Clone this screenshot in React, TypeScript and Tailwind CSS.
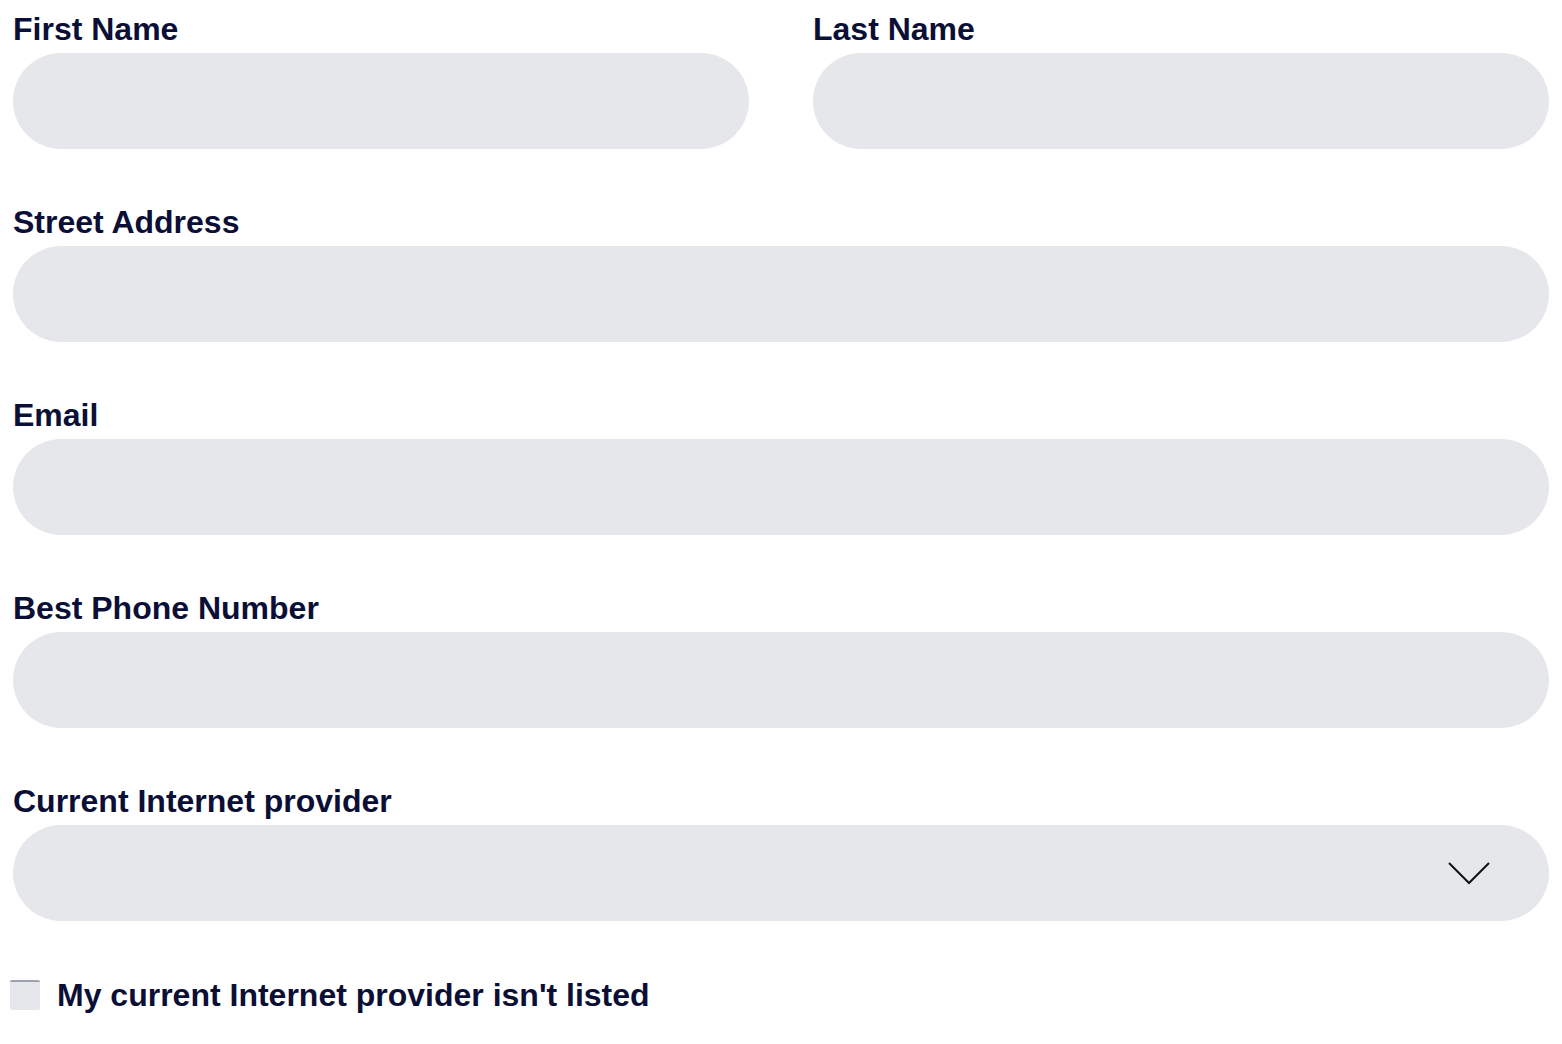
const labelCls =
  'block pt-[10px] mb-[5px] text-[32px] leading-[38px] font-bold text-[#0b0f36]'
const inputCls =
  'block w-full h-[96px] rounded-full bg-[#e5e7eb] px-8 text-[24px] outline-none'

function Field({ label, id }: { label: string; id: string }) {
  return (
    <div className="flex-1">
      <label htmlFor={id} className={labelCls}>
        {label}
      </label>
      <input id={id} type="text" className={inputCls} />
    </div>
  )
}

export default function App() {
  return (
    <div
      className="min-h-screen bg-white px-[13px]"
      style={{ fontFamily: '"Liberation Sans", Arial, sans-serif' }}
    >
      <form className="flex flex-col gap-[44px]">
        <div className="flex gap-[64px]">
          <Field label="First Name" id="first" />
          <Field label="Last Name" id="last" />
        </div>
        <Field label="Street Address" id="street" />
        <Field label="Email" id="email" />
        <Field label="Best Phone Number" id="phone" />
        <div>
          <label htmlFor="provider" className={labelCls}>
            Current Internet provider
          </label>
          <div className="relative">
            <select
              id="provider"
              className="block w-full h-[96px] rounded-full bg-[#e5e7eb] px-8 text-[24px] appearance-none outline-none"
            >
              <option value=""></option>
            </select>
            <svg
              className="absolute right-[59px] top-[37px] pointer-events-none"
              width="42"
              height="24"
              viewBox="0 0 42 24"
              fill="none"
            >
              <path d="M1 1 L21 21 L41 1" stroke="#111" strokeWidth="2" />
            </svg>
          </div>
        </div>
      </form>
      <div className="flex items-center mt-[56px] -ml-[3px]">
        <span className="w-[30px] h-[30px] bg-[#e5e7eb] border-t-2 border-[#9ca3af] rounded-[2px]" />
        <span className="ml-[17px] text-[32px] leading-[36px] font-bold text-[#0b0f36]">
          My current Internet provider isn't listed
        </span>
      </div>
    </div>
  )
}
